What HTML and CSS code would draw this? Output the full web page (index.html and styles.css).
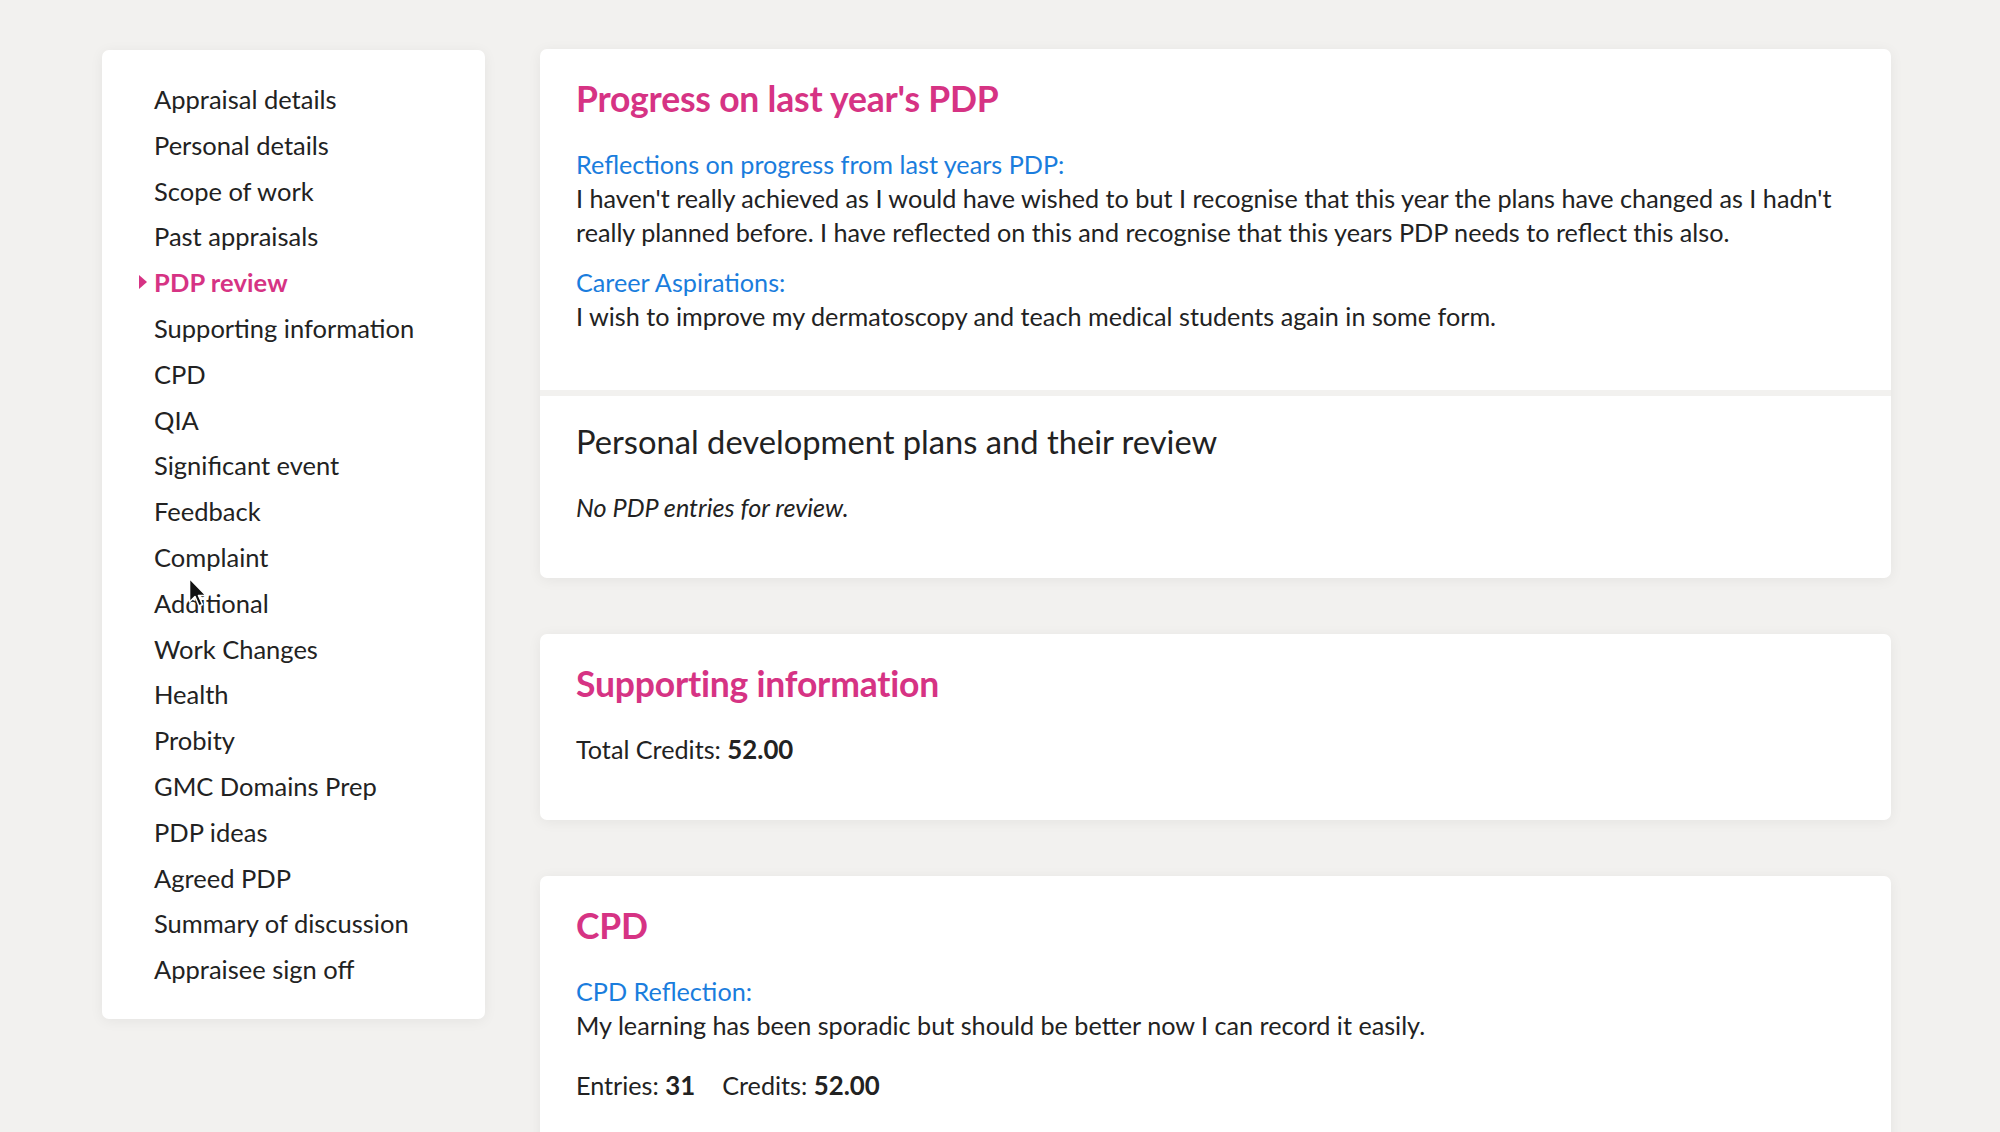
FILE: index.html
```html
<!DOCTYPE html>
<html lang="en">
<head>
<meta charset="utf-8">
<title>PDP review</title>
<link rel="stylesheet" href="styles.css">
</head>
<body>
<div class="layout">
  <nav class="sidebar">
    <ul class="nav-list">
      <li class="nav-item">Appraisal details</li>
      <li class="nav-item">Personal details</li>
      <li class="nav-item">Scope of work</li>
      <li class="nav-item">Past appraisals</li>
      <li class="nav-item active">PDP review</li>
      <li class="nav-item">Supporting information</li>
      <li class="nav-item">CPD</li>
      <li class="nav-item">QIA</li>
      <li class="nav-item">Significant event</li>
      <li class="nav-item">Feedback</li>
      <li class="nav-item">Complaint</li>
      <li class="nav-item">Additional</li>
      <li class="nav-item">Work Changes</li>
      <li class="nav-item">Health</li>
      <li class="nav-item">Probity</li>
      <li class="nav-item">GMC Domains Prep</li>
      <li class="nav-item">PDP ideas</li>
      <li class="nav-item">Agreed PDP</li>
      <li class="nav-item">Summary of discussion</li>
      <li class="nav-item">Appraisee sign off</li>
    </ul>
  </nav>
  <main class="content">
    <section class="card">
      <div class="card-section first">
        <h2 class="title">Progress on last year's PDP</h2>
        <div class="field">
          <div class="label">Reflections on progress from last years PDP:</div>
          <p class="text">I haven't really achieved as I would have wished to but I recognise that this year the plans have changed as I hadn't really planned before. I have reflected on this and recognise that this years PDP needs to reflect this also.</p>
        </div>
        <div class="field">
          <div class="label">Career Aspirations:</div>
          <p class="text">I wish to improve my dermatoscopy and teach medical students again in some form.</p>
        </div>
      </div>
      <div class="card-section second">
        <h3 class="subtitle">Personal development plans and their review</h3>
        <p class="text empty">No PDP entries for review.</p>
      </div>
    </section>
    <section class="card">
      <div class="card-section">
        <h2 class="title">Supporting information</h2>
        <p class="text">Total Credits: <b>52.00</b></p>
      </div>
    </section>
    <section class="card">
      <div class="card-section">
        <h2 class="title">CPD</h2>
        <div class="field">
          <div class="label">CPD Reflection:</div>
          <p class="text">My learning has been sporadic but should be better now I can record it easily.</p>
        </div>
        <div class="stats">
          <span>Entries: <b>31</b></span>
          <span>Credits: <b>52.00</b></span>
        </div>
      </div>
    </section>
  </main>
</div>
<svg class="cursor" width="22" height="32" viewBox="0 0 22 32" aria-hidden="true">
  <path d="M1.5 1.5 L1.5 25 L7 19.5 L11 29 L14.5 27.5 L10.5 18.5 L18 18.5 Z" fill="#111" stroke="#fff" stroke-width="1.6" stroke-linejoin="round"/>
</svg>
</body>
</html>
```
FILE: styles.css
```css
* { box-sizing: border-box; }

html, body {
  margin: 0;
  padding: 0;
}

body {
  background: #f2f1ef;
  font-family: Lato, "Open Sans", "Liberation Sans", sans-serif;
  color: #222;
  font-size: 25.2px;
  line-height: 34px;
  min-height: 1132px;
  overflow: hidden;
}

.layout {
  display: flex;
  align-items: flex-start;
  gap: 55px;
  padding: 49px 0 0 102px;
}

.sidebar {
  width: 383px;
  flex: none;
  margin-top: 1px;
  background: #fff;
  border-radius: 7px;
  box-shadow: 0 2px 14px rgba(0, 0, 0, 0.06);
  padding: 26px 0 27px 0;
}

.nav-list {
  list-style: none;
  margin: 0;
  padding: 0;
}

.nav-item {
  position: relative;
  padding: 6px 0 5.8px 52px;
  font-size: 25.5px;
  line-height: 34px;
  color: #222;
}

.nav-item.active {
  color: #d63384;
  font-weight: bold;
  letter-spacing: 0.1px;
}

.nav-item.active::before {
  content: "";
  position: absolute;
  left: 37px;
  top: 50%;
  margin-top: -7px;
  border-left: 8px solid #d63384;
  border-top: 7px solid transparent;
  border-bottom: 7px solid transparent;
}

.content {
  width: 1351px;
  flex: none;
  display: flex;
  flex-direction: column;
  gap: 56px;
}

.card {
  background: #fff;
  border-radius: 7px;
  box-shadow: 0 2px 14px rgba(0, 0, 0, 0.06);
  display: flex;
  flex-direction: column;
}

.card .card-section + .card-section {
  border-top: 6px solid #f2f1ef;
}

.card-section {
  padding: 30px 36px 38px;
}

.card-section.first {
  padding-bottom: 41px;
}

.card-section.second {
  padding-top: 26px;
}

.title {
  margin: 0 0 28px;
  font-size: 35.5px;
  line-height: 40px;
  font-weight: bold;
  color: #d63384;
  letter-spacing: -0.2px;
}

.subtitle {
  margin: 0 0 28px;
  font-size: 32.7px;
  line-height: 40px;
  font-weight: normal;
  color: #222;
}

.label {
  color: #1a7ddd;
  line-height: 34px;
}

.field + .field {
  margin-top: 16px;
}

.text {
  margin: 0 0 16px;
  line-height: 34px;
}

.text b,
.stats b {
  font-size: 25.8px;
}

.empty {
  font-style: italic;
}

.stats {
  margin: 26px 0 16px;
  display: flex;
  gap: 27px;
}

.cursor {
  position: absolute;
  left: 188px;
  top: 577px;
}
```
